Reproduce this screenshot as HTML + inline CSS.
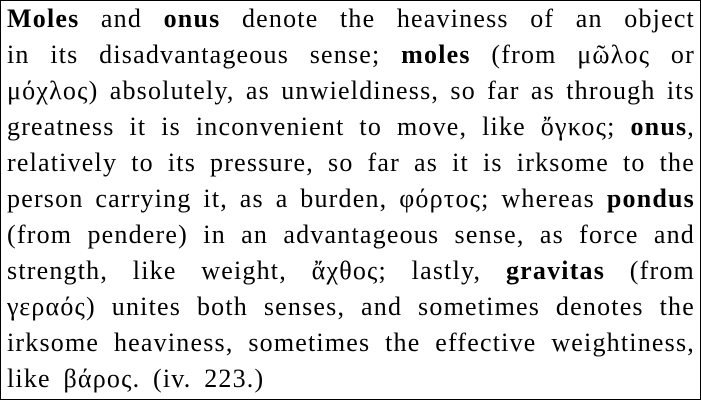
<!DOCTYPE html>
<html><head><meta charset="utf-8"><style>
html,body{margin:0;padding:0;background:#fff;}
.box{position:absolute;left:0;top:0;width:699px;height:398px;border:1px solid #000;}
.t{position:absolute;left:7px;top:1px;width:688px;font-family:"Liberation Serif","DejaVu Serif",serif;font-size:26px;letter-spacing:1.2px;line-height:36px;color:#000;}
.l{text-align:justify;text-align-last:justify;white-space:nowrap;height:36px;}
.l.e{text-align-last:left;word-spacing:5px;}
b{font-weight:bold;}
</style></head><body>
<div class="box"></div>
<div class="t">
<div class="l"><b>Moles</b> and <b>onus</b> denote the heaviness of an object</div>
<div class="l">in its disadvantageous sense; <b>moles</b> (from μῶλος or</div>
<div class="l">μόχλος) absolutely, as unwieldiness, so far as through its</div>
<div class="l">greatness it is inconvenient to move, like ὄγκος; <b>onus</b>,</div>
<div class="l">relatively to its pressure, so far as it is irksome to the</div>
<div class="l">person carrying it, as a burden, φόρτος; whereas <b>pondus</b></div>
<div class="l">(from pendere) in an advantageous sense, as force and</div>
<div class="l">strength, like weight, ἄχθος; lastly, <b>gravitas</b> (from</div>
<div class="l">γεραός) unites both senses, and sometimes denotes the</div>
<div class="l">irksome heaviness, sometimes the effective weightiness,</div>
<div class="l e">like βάρος. (iv. 223.)</div>
</div>
</body></html>
